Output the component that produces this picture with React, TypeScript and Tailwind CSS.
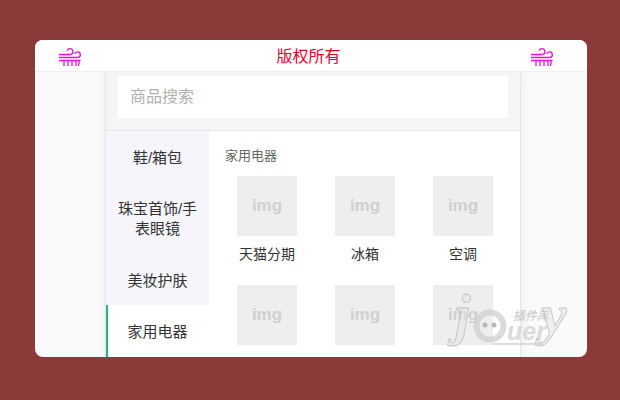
const CJK = "font-['Liberation_Sans','Noto_Sans_CJK_SC',sans-serif]";

const WindIcon = () => (
  <svg width="22" height="20" viewBox="0 0 22 20" fill="none" stroke="#f010d8" strokeWidth="1.3">
    <path d="M0 8.500h11c1.800 0 3-1.200 3-2.900 0-1.700-1.300-2.900-3-2.900-1.400 0-2.500.8-2.800 2" />
    <path d="M0 11.500h18.500c1.500 0 2.800-1.200 2.800-2.800 0-1.600-1.300-2.800-2.900-2.800-1.300 0-2.300.7-2.600 1.900" />
    <path d="M0 14.500h21.500" />
    <path d="M5 14.500V20M9 14.500V20M13 14.500V20M17 14.500V20M20.500 14.500L19.500 20" />
  </svg>
);

const categories = [
  { name: "鞋/箱包", h: "h-[51px]" },
  { name: "珠宝首饰/手表眼镜", h: "h-[71px]" },
  { name: "美妆护肤", h: "h-[52px]" },
];

const products = ["天猫分期", "冰箱", "空调", "", "", ""];

const Watermark = () => (
  <svg className="absolute left-[445px] top-[298px] pointer-events-none overflow-visible" width="135" height="56" viewBox="0 0 135 56" fill="none">
    <text x="10" y="36" fontSize="56" fontWeight="700" fontStyle="italic" fontFamily="Liberation Serif" fill="#e4e4e4" fillOpacity="0.5" stroke="#b4b4b4" strokeWidth="0.8" strokeOpacity="0.8">j</text>
    <circle cx="45" cy="28" r="13.500" stroke="#cfcfcf" strokeWidth="6" opacity="0.75" />
    <circle cx="40" cy="27" r="2.500" fill="#b8b8b8" />
    <circle cx="49" cy="27" r="2.500" fill="#b8b8b8" />
    <text x="62" y="42" fontSize="25" fontWeight="700" fontStyle="italic" fontFamily="Liberation Sans" fill="#d8d8d8" opacity="0.9">uer</text>
    <text x="68" y="22" fontSize="12" fontStyle="italic" fontFamily="Noto Sans CJK SC" fill="#bdbdbd" opacity="0.9">插件库</text>
    <text x="96" y="36" fontSize="58" fontWeight="700" fontStyle="italic" fontFamily="Liberation Serif" fill="#e4e4e4" fillOpacity="0.5" stroke="#b4b4b4" strokeWidth="0.8" strokeOpacity="0.8">y</text>
    <rect x="48" y="45" width="50" height="2" fill="#cfcfcf" opacity="0.7" />
  </svg>
);

export default function App() {
  return (
    <div className={`relative w-[620px] h-[400px] bg-[#8b3a3a] pt-10 px-[35px] overflow-hidden ${CJK}`}>
      <div className="flex flex-col w-[552px] h-[317px] bg-[#fafafa] rounded-lg overflow-hidden">
        <header className="relative z-10 flex items-center justify-between shrink-0 h-8 pl-6 pr-[34px] bg-white border-b border-[#f0f0f0] overflow-hidden">
          <WindIcon />
          <h1 className="ml-[5px] pt-[3px] text-base text-[#e6002d]">版权所有</h1>
          <WindIcon />
        </header>
        <main className="flex flex-col w-[416px] ml-[70px] flex-1 min-h-0 bg-white border-x border-[#e6e6e6] shadow-[0_0_10px_rgba(0,0,0,0.07)]">
          <div className="shrink-0 h-[59px] pt-1 px-3 bg-[#f5f5f5] border-b border-[#e6e6e6]">
            <input
              className="block w-[390px] h-[42px] px-3 bg-white text-base outline-none placeholder:text-[#b0b0b0]"
              placeholder="商品搜索"
              readOnly
            />
          </div>
          <div className="flex flex-1 min-h-0">
            <aside className="shrink-0 w-[103px] text-[15px] leading-5 text-[#333333]">
              {categories.map((c) => (
                <div key={c.name} className={`flex items-center justify-center ${c.h} px-[11px] pt-[3px] text-center bg-[#f5f5fb]`}>
                  {c.name}
                </div>
              ))}
              <div className="flex items-center justify-center h-[52px] pt-px pr-[2px] bg-white border-l-2 border-[#26b38c]">
                家用电器
              </div>
            </aside>
            <section className="flex-1 pt-4 pl-[9px]">
              <h2 className="pl-[7px] text-[13px] leading-[18px] text-[#666666]">家用电器</h2>
              <div className="grid grid-cols-[98px_98px_98px] mt-[11px]">
                {products.map((p, i) => (
                  <div key={i} className="flex flex-col items-center h-[109px]">
                    <div className="flex items-center justify-center w-[60px] h-[60px] bg-[#eeeeee] text-[17px] font-bold text-[#d0d0d0] font-['Liberation_Sans',sans-serif]">
                      img
                    </div>
                    {p && <p className="mt-2 text-sm leading-5 text-[#333333]">{p}</p>}
                  </div>
                ))}
              </div>
            </section>
          </div>
        </main>
      </div>
      <Watermark />
    </div>
  );
}
